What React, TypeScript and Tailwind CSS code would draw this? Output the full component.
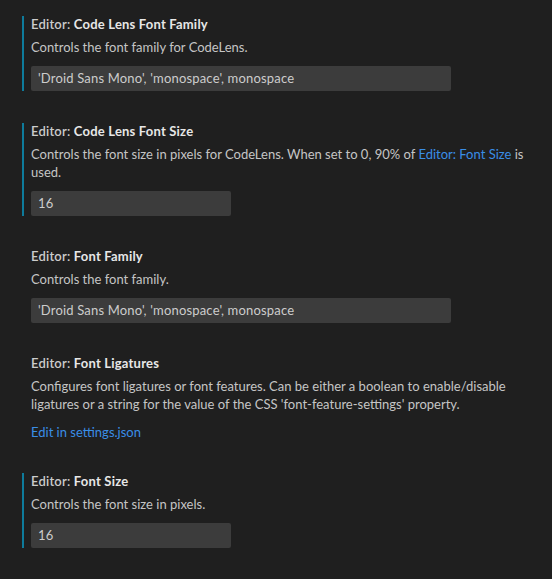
import React from "react";

const font = { fontFamily: "Lato, 'Noto Sans', sans-serif" };

function Title({ name }: { name: string }) {
  return (
    <div className="h-[16px] leading-[16px] text-[13px] whitespace-nowrap tracking-[0.2px]">
      <span className="font-semibold text-[#cccccc]">Editor: </span>
      <span className="font-bold text-[#e7e7e7]">{name}</span>
    </div>
  );
}

function Desc({ children, wrap }: { children: React.ReactNode; wrap?: boolean }) {
  return (
    <div className={`mt-[6px] text-[13px] leading-[18px] text-[#c5c5c5] ${wrap ? "w-[505px]" : ""}`}>
      {children}
    </div>
  );
}

function Input({ value, wide }: { value: string; wide?: boolean }) {
  return (
    <div
      className={`mt-[10px] h-[25px] ${wide ? "w-[420px]" : "w-[200px]"} bg-[#3c3c3c] rounded-[2px] pl-[7px] flex items-center text-[13px] tracking-[0.18px] text-[#cccccc]`}
    >
      {value}
    </div>
  );
}

function Item({ modified, children }: { modified?: boolean; children: React.ReactNode }) {
  return (
    <div className={`ml-[22px] pl-[7px] border-l-2 ${modified ? "border-[#0e7b9b]" : "border-transparent"}`}>
      {children}
    </div>
  );
}

export default function App() {
  return (
    <div className="w-[552px] h-[579px] bg-[#1f1f1f] pt-[16px] flex flex-col gap-[32px]" style={font}>
      <Item modified>
        <Title name="Code Lens Font Family" />
        <Desc>Controls the font family for CodeLens.</Desc>
        <Input wide value="'Droid Sans Mono', 'monospace', monospace" />
      </Item>
      <Item modified>
        <Title name="Code Lens Font Size" />
        <Desc wrap>
          Controls the font size in pixels for CodeLens. When set to 0, 90% of{" "}
          <a className="text-[#3a8ee6]">Editor: Font Size</a> is used.
        </Desc>
        <Input value="16" />
      </Item>
      <Item>
        <Title name="Font Family" />
        <Desc>Controls the font family.</Desc>
        <Input wide value="'Droid Sans Mono', 'monospace', monospace" />
      </Item>
      <Item>
        <Title name="Font Ligatures" />
        <Desc wrap>
          Configures font ligatures or font features. Can be either a boolean to enable/disable ligatures or a
          string for the value of the CSS 'font-feature-settings' property.
        </Desc>
        <div className="mt-[10px] text-[13px] leading-[18px] text-[#3a8ee6]">Edit in settings.json</div>
      </Item>
      <Item modified>
        <Title name="Font Size" />
        <Desc>Controls the font size in pixels.</Desc>
        <Input value="16" />
      </Item>
    </div>
  );
}
